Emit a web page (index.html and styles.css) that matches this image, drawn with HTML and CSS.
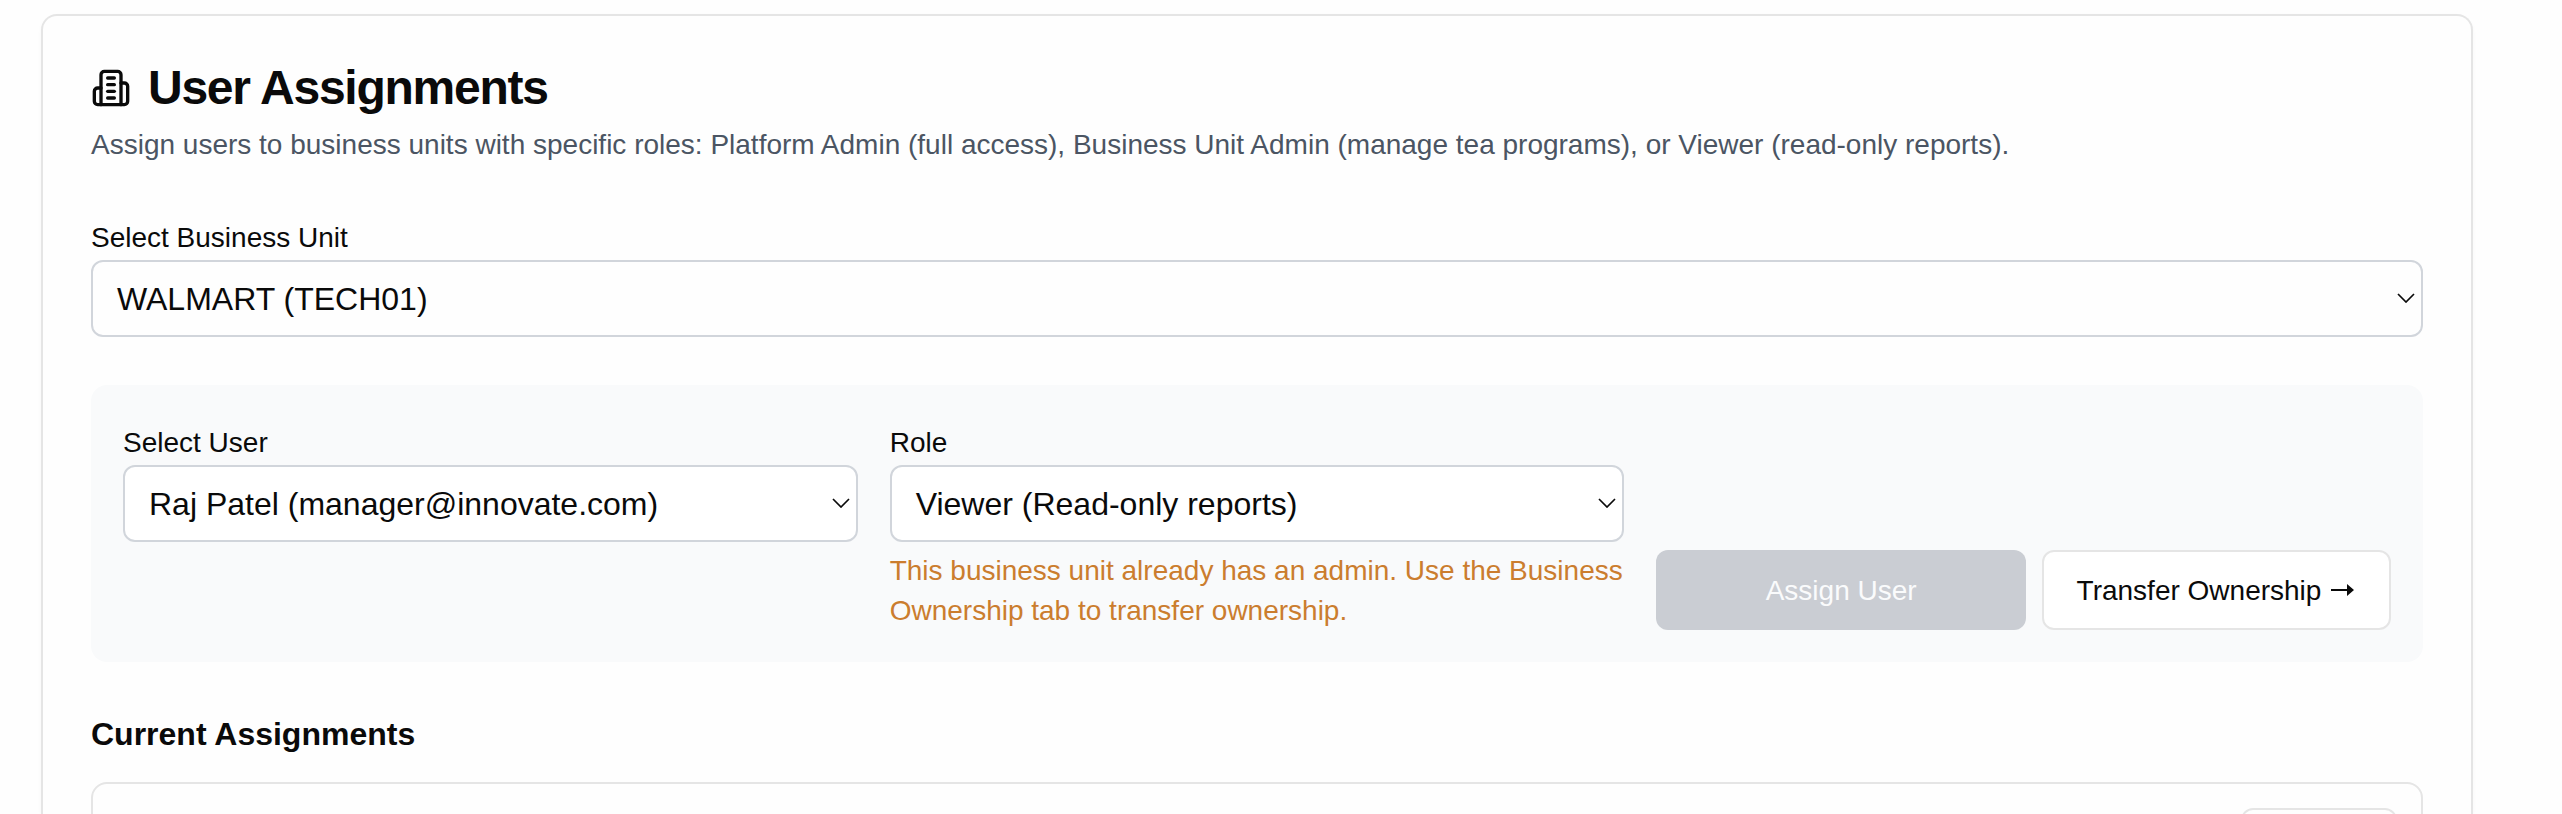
FILE: index.html
```html
<!DOCTYPE html>
<html lang="en">
<head>
<meta charset="utf-8">
<title>User Assignments</title>
<link rel="stylesheet" href="styles.css">
</head>
<body>
<main class="card">
  <header class="card-header">
    <h1 class="title">
      <svg class="title-icon" viewBox="0 0 24 24" fill="none" stroke="currentColor" stroke-width="2" stroke-linecap="round" stroke-linejoin="round"><path d="M6 22V4a2 2 0 0 1 2-2h8a2 2 0 0 1 2 2v18Z"/><path d="M6 12H4a2 2 0 0 0-2 2v6a2 2 0 0 0 2 2h2"/><path d="M18 9h2a2 2 0 0 1 2 2v9a2 2 0 0 1-2 2h-2"/><path d="M10 6h4"/><path d="M10 10h4"/><path d="M10 14h4"/><path d="M10 18h4"/></svg>
      <span class="title-text">User Assignments</span>
    </h1>
    <p class="description">Assign users to business units with specific roles: Platform Admin (full access), Business Unit Admin (manage tea programs), or Viewer (read-only reports).</p>
  </header>

  <section class="field unit-field">
    <div class="label">Select Business Unit</div>
    <div class="select"><span>WALMART (TECH01)</span><svg class="chevron" viewBox="0 0 18 10"><path d="M1 1l8 8 8-8"/></svg></div>
  </section>

  <section class="panel">
    <div class="field">
      <div class="label">Select User</div>
      <div class="select"><span>Raj Patel (manager@innovate.com)</span><svg class="chevron" viewBox="0 0 18 10"><path d="M1 1l8 8 8-8"/></svg></div>
    </div>
    <div class="field">
      <div class="label">Role</div>
      <div class="select"><span>Viewer (Read-only reports)</span><svg class="chevron" viewBox="0 0 18 10"><path d="M1 1l8 8 8-8"/></svg></div>
      <p class="hint">This business unit already has an admin. Use the Business Ownership tab to transfer ownership.</p>
    </div>
    <div class="actions">
      <button class="button assign" disabled>Assign User</button>
      <button class="button transfer"><span class="transfer-text">Transfer Ownership</span><svg class="arrow" viewBox="0 0 23 12"><path d="M0 5h16V0l7 6-7 6V7H0z"/></svg></button>
    </div>
  </section>

  <h2 class="subtitle">Current Assignments</h2>
  <section class="assignment"><div class="assignment-action"></div></section>
</main>
</body>
</html>
```
FILE: styles.css
```css
* { box-sizing: border-box; }

body {
  margin: 0;
  height: 814px;
  overflow: hidden;
  padding: 14px 89px 0 41px;
  background: #fefefe;
  color: #0a0a0a;
  font-family: "Liberation Sans", Arial, sans-serif;
  font-size: 28px;
  line-height: 40px;
}

h1, h2, p { margin: 0; }

.card {
  height: 800px;
  padding: 48px 48px 0;
  border: 2px solid #e5e5e5;
  border-bottom: 0;
  border-radius: 16px 16px 0 0;
  background: #fefefe;
  box-shadow: 0 2px 4px rgba(0, 0, 0, 0.03);
  overflow: hidden;
}

.card-header { display: flex; flex-direction: column; gap: 13px; }

.title {
  display: flex;
  align-items: center;
  gap: 17px;
  height: 48px;
  font-size: 48px;
  line-height: 48px;
  letter-spacing: -1.25px;
}

.title-icon { width: 40px; height: 40px; }
.description { color: #4b5563; }
.unit-field { margin-top: 53px; }
.label { margin-bottom: 2px; }

.select {
  display: flex;
  align-items: center;
  justify-content: space-between;
  height: 77px;
  padding: 0 6px 0 24px;
  border: 2px solid #d1d5db;
  border-radius: 12px;
  background: #fff;
  font-size: 32px;
}

.unit-field .select { background: #fefefe; }

.chevron {
  width: 18px;
  height: 10px;
  margin-bottom: 1px;
  fill: none;
  stroke: #0a0a0a;
  stroke-width: 1.7;
}

.panel {
  display: grid;
  grid-template-columns: repeat(3, minmax(0, 1fr));
  grid-template-rows: 207px;
  gap: 32px;
  height: 277px;
  margin-top: 48px;
  padding: 38px 32px 32px;
  border-radius: 16px;
  background: #f9fafb;
}

.hint { margin-top: 9px; color: #cb7d2e; }
.actions { display: flex; gap: 16px; align-items: flex-end; }

.button {
  height: 80px;
  padding: 2px 6px 0;
  border-radius: 12px;
  font: inherit;
}

.assign { flex: 1; border: 0; background: #cacdd3; color: #fafbfc; }

.transfer {
  display: flex;
  align-items: center;
  justify-content: center;
  gap: 10px;
  width: 349px;
  padding-right: 8px;
  border: 2px solid #e5e5e5;
  background: #fff;
  color: #0a0a0a;
}

.arrow { width: 23px; height: 12px; margin-bottom: 2px; fill: currentColor; }

.subtitle { margin-top: 52px; font-size: 32px; line-height: 40px; }

.assignment {
  display: flex;
  justify-content: flex-end;
  height: 180px;
  margin-top: 28px;
  padding: 24px;
  border: 2px solid #e5e5e5;
  border-radius: 16px;
}

.assignment-action {
  width: 156px;
  height: 72px;
  border: 2px solid #e5e5e5;
  border-radius: 12px;
}
```
